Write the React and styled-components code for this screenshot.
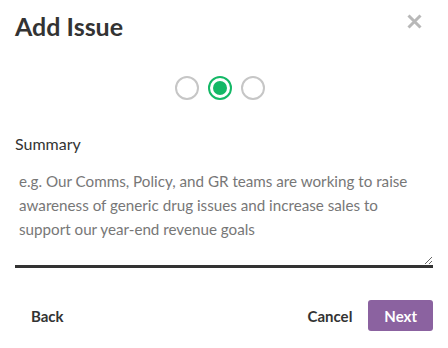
import React from 'react';
import styled, { createGlobalStyle } from 'styled-components';

const GlobalStyle = createGlobalStyle`
  body {
    margin: 0;
    background: #ffffff;
    font-family: Lato, "Liberation Sans", sans-serif;
    color: #333333;
  }
`;

const Modal = styled.div`
  width: 448px;
  height: 348px;
  box-sizing: border-box;
  padding: 11px 15px 0;
  display: flex;
  flex-direction: column;
`;

const Header = styled.header`
  display: flex;
  justify-content: space-between;
  align-items: flex-start;
`;

const Title = styled.h2`
  margin: 0;
  font-size: 25px;
  font-weight: 700;
  line-height: 31px;
  color: #333333;
`;

const CloseButton = styled.button`
  border: 0;
  background: none;
  padding: 0;
  margin: 3px 11px 0 0;
  width: 15px;
  height: 15px;
  cursor: pointer;
  display: flex;
`;

const Stepper = styled.div`
  display: flex;
  justify-content: center;
  gap: 9px;
  margin: 34px 9px 0 0;
`;

const Step = styled.span`
  width: 24px;
  height: 24px;
  box-sizing: border-box;
  border-radius: 50%;
  border: 2px solid ${({ active }) => (active ? '#14b866' : '#c6c6c6')};
  display: flex;
  align-items: center;
  justify-content: center;

  &::after {
    content: '';
    display: ${({ active }) => (active ? 'block' : 'none')};
    width: 14px;
    height: 14px;
    border-radius: 50%;
    background: #14b866;
  }
`;

const Label = styled.label`
  display: block;
  margin-top: 34px;
  font-size: 16px;
  line-height: 20px;
  color: #333333;
`;

const Summary = styled.textarea`
  margin-top: 9px;
  width: 100%;
  height: 105px;
  box-sizing: border-box;
  border: 0;
  border-bottom: 3px solid #333333;
  padding: 6px 4px;
  font-family: inherit;
  font-size: 15.2px;
  line-height: 24px;
  color: #333333;
  resize: vertical;
  outline: none;

  &::placeholder {
    color: #777777;
  }
`;

const Footer = styled.footer`
  display: flex;
  align-items: center;
  justify-content: space-between;
  margin-top: 32px;
`;

const Actions = styled.div`
  display: flex;
  align-items: center;
`;

const Button = styled.button`
  border: 0;
  border-radius: 3px;
  height: 31px;
  padding: 0 16px;
  font-family: inherit;
  font-size: 15px;
  font-weight: 700;
  color: ${({ primary }) => (primary ? '#ffffff' : '#333333')};
  background: ${({ primary }) => (primary ? '#8b62a0' : 'transparent')};
  cursor: pointer;
`;

function CloseIcon() {
  return (
    <svg width='15' height='15' viewBox='0 0 15 15'>
      <path d='M1.5 1.5 L13.5 13.5 M13.5 1.5 L1.5 13.5' stroke='#b8b8b8' strokeWidth='3' />
    </svg>
  );
}

export default function App() {
  const steps = [false, true, false];

  return (
    <>
      <GlobalStyle />
      <Modal>
        <Header>
          <Title>Add Issue</Title>
          <CloseButton aria-label='Close'>
            <CloseIcon />
          </CloseButton>
        </Header>
        <Stepper>
          {steps.map((active, i) => (
            <Step key={i} active={active} />
          ))}
        </Stepper>
        <Label htmlFor='summary'>Summary</Label>
        <Summary
          id='summary'
          placeholder='e.g. Our Comms, Policy, and GR teams are working to raise awareness of generic drug issues and increase sales to support our year-end revenue goals'
        />
        <Footer>
          <Button>Back</Button>
          <Actions>
            <Button>Cancel</Button>
            <Button primary>Next</Button>
          </Actions>
        </Footer>
      </Modal>
    </>
  );
}
